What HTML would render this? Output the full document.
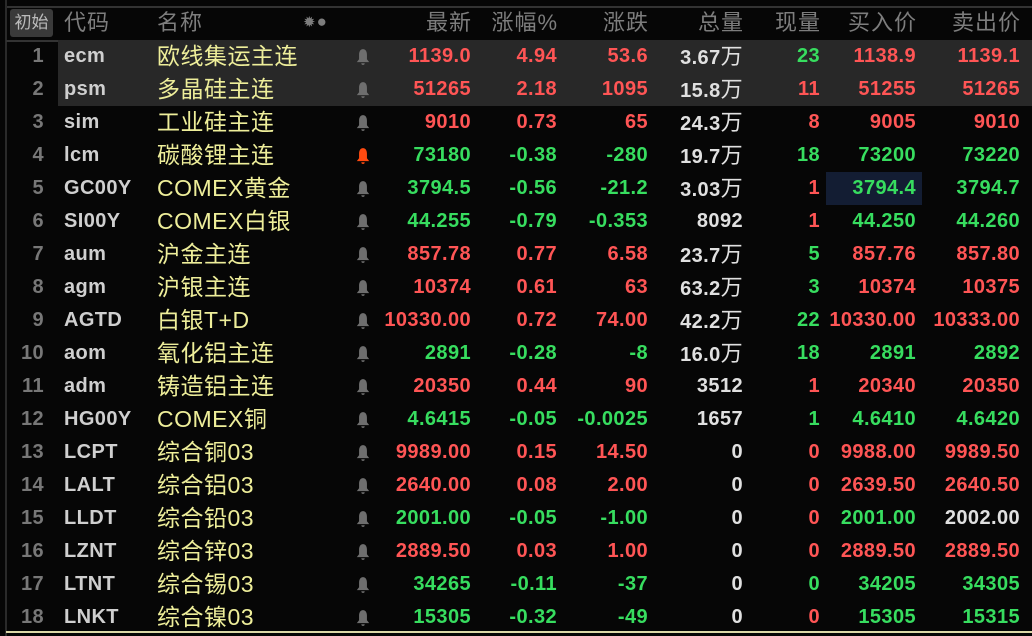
<!DOCTYPE html><html><head><meta charset="utf-8"><style>
body{margin:0;width:1032px;height:636px;background:#060606;overflow:hidden;position:relative;font-family:"Liberation Sans","Noto Sans CJK SC",sans-serif}
.top{position:absolute;left:6px;top:0;width:1026px;height:6px;border-bottom:2px solid #333}
.vl{position:absolute;left:5px;top:0;width:2px;height:636px;background:#2a2a2a}
.hd{position:absolute;top:8px;height:32px;border-bottom:2px solid #333;left:6px;right:0}
.h{position:absolute;top:8px;font-size:22px;color:#7d7d7d;line-height:30px;letter-spacing:1px}
.btn{position:absolute;left:10px;top:9px;width:43px;height:28px;background:#3a3a3a;border-radius:3px;color:#bbb;font-size:17px;line-height:28px;text-align:center}
.r{position:absolute;left:0;width:1032px;height:33px;font-size:20px;font-weight:bold;line-height:33px;letter-spacing:0.4px}
.r.hl .bg{position:absolute;left:58px;right:0;top:0;bottom:0;background:#282828}
.r span{position:absolute;top:0}
.c{left:64px;color:#cfcfcf}
.m{left:157px;color:#eeee9a;font-weight:normal;font-size:23px;letter-spacing:0.5px}
.v{text-align:right}
.R{color:#ff5555}.G{color:#37dd5f}.W{color:#e0e0e0}
.bot{position:absolute;left:6px;right:0;top:631px;height:2px;background:#ddd8a8}
</style></head><body>
<div class="top"></div><div class="vl"></div>
<div class="hd"></div>
<div class="btn">初始</div>
<div class="h" style="left:64px">代码</div>
<div class="h" style="left:157px">名称</div>
<div class="h" style="left:303px;font-size:15px;top:7px">✹<span style="font-size:17px">●</span></div>
<div class="h" style="right:560px">最新</div>
<div class="h" style="right:474px">涨幅%</div>
<div class="h" style="right:383px">涨跌</div>
<div class="h" style="right:288px">总量</div>
<div class="h" style="right:211px">现量</div>
<div class="h" style="right:115px">买入价</div>
<div class="h" style="right:11px">卖出价</div>
<div style="position:absolute;left:826px;top:172px;width:96px;height:33px;background:#131d33"></div>
<div id="rows"></div>
<div class="bot"></div>
<script>
var d=[
["ecm","欧线集运主连","R","1139.0","4.94","53.6","3.67万","G23","1138.9","1139.1",1],
["psm","多晶硅主连","R","51265","2.18","1095","15.8万","R11","51255","51265",1],
["sim","工业硅主连","R","9010","0.73","65","24.3万","R8","9005","9010"],
["lcm","碳酸锂主连","G","73180","-0.38","-280","19.7万","G18","73200","73220",0,1],
["GC00Y","COMEX黄金","G","3794.5","-0.56","-21.2","3.03万","R1","3794.4","3794.7"],
["SI00Y","COMEX白银","G","44.255","-0.79","-0.353","8092","R1","44.250","44.260"],
["aum","沪金主连","R","857.78","0.77","6.58","23.7万","G5","857.76","857.80"],
["agm","沪银主连","R","10374","0.61","63","63.2万","G3","10374","10375"],
["AGTD","白银T+D","R","10330.00","0.72","74.00","42.2万","G22","10330.00","10333.00"],
["aom","氧化铝主连","G","2891","-0.28","-8","16.0万","G18","2891","2892"],
["adm","铸造铝主连","R","20350","0.44","90","3512","R1","20340","20350"],
["HG00Y","COMEX铜","G","4.6415","-0.05","-0.0025","1657","G1","4.6410","4.6420"],
["LCPT","综合铜03","R","9989.00","0.15","14.50","0","R0","9988.00","9989.50"],
["LALT","综合铝03","R","2640.00","0.08","2.00","0","R0","2639.50","2640.50"],
["LLDT","综合铅03","G","2001.00","-0.05","-1.00","0","R0","2001.00","W2002.00"],
["LZNT","综合锌03","R","2889.50","0.03","1.00","0","R0","2889.50","2889.50"],
["LTNT","综合锡03","G","34265","-0.11","-37","0","G0","34205","34305"],
["LNKT","综合镍03","G","15305","-0.32","-49","0","R0","15305","15315"]];
var h="",rt=[561,475,384,289,212,116,12];
d.forEach(function(x,i){var y=40+i*33,c=x[2];
var bell='<svg style="position:absolute;left:355px;top:8px" width="16" height="18" viewBox="0 0 14 16"><path d="M7 1C4.5 1 3.5 3.5 3.5 6V10L1.5 12.5H12.5L10.5 10V6C10.5 3.5 9.5 1 7 1Z M5.5 13.5A1.5 1.5 0 0 0 8.5 13.5Z" fill="'+(x[11]?'#ff4a10':'#6e6e6e')+'"/></svg>';
var s='<div class="r'+(x[10]?' hl':'')+'" style="top:'+y+'px"><div class="bg"></div><span style="left:0;width:44px;text-align:right;color:#777">'+(i+1)+'</span><span class="c">'+x[0]+'</span><span class="m">'+x[1]+'</span>'+bell;
var vals=[x[3],x[4],x[5],x[6],x[7],x[8],x[9]];
vals.forEach(function(v,k){var col=c;
if(k==3){col="W";}
if(k==4){col=v[0];v=v.slice(1);}
if(k==6&&v[0]=="W"){col="W";v=v.slice(1);}
var t=v.replace("万",'<span style="position:static;font-weight:normal;font-size:22px">万</span>');
s+='<span class="v '+col+'" style="right:'+rt[k]+'px">'+t+'</span>';});
h+=s+'</div>';});
document.getElementById("rows").innerHTML=h;
</script>
</body></html>
